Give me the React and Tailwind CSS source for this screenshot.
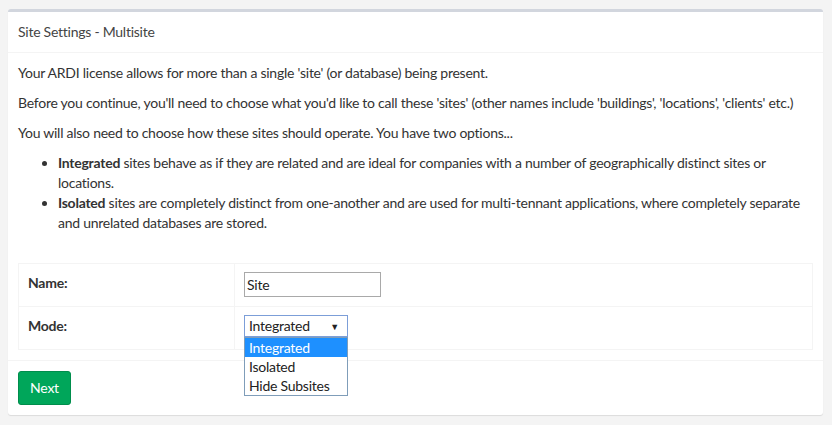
export default function App() {
  const font = { fontFamily: 'Lato, "Noto Sans", sans-serif' };
  return (
    <div className="w-[832px] h-[425px] bg-[#f4f4f4] pt-[9px] pl-[8px] text-[14px] text-[#333] leading-[20px] tracking-[-0.25px]" style={font}>
      <div className="w-[815px] bg-white border-t-[3px] border-[#d2d6de] rounded-[3px] shadow-[0_1px_1px_rgba(0,0,0,0.1)]">
        <div className="px-[10px] py-[10px] border-b border-[#f4f4f4] text-[#444]">Site Settings - Multisite</div>
        <div className="p-[10px]">
          <p className="mb-[10px]">Your ARDI license allows for more than a single 'site' (or database) being present.</p>
          <p className="mb-[10px]">Before you continue, you'll need to choose what you'd like to call these 'sites' (other names include 'buildings', 'locations', 'clients' etc.)</p>
          <p className="mb-[10px]">You will also need to choose how these sites should operate. You have two options...</p>
          <ul className="list-disc pl-[40px] mb-[30px]">
            <li><b>Integrated</b> sites behave as if they are related and are ideal for companies with a number of geographically distinct sites or locations.</li>
            <li><b>Isolated</b> sites are completely distinct from one-another and are used for multi-tennant applications, where completely separate and unrelated databases are stored.</li>
          </ul>
          <div className="border border-[#f4f4f4]">
            <div className="grid grid-cols-[216px_1fr] h-[43px] border-b border-[#f4f4f4]">
              <div className="px-[9px] pt-[9px] font-bold border-r border-[#f4f4f4]">Name:</div>
              <div className="pl-[9px] pt-[8px]">
                <div className="w-[137px] h-[25px] border border-[#a9a9a9] pl-[2px] leading-[23px] text-[#222]">Site</div>
              </div>
            </div>
            <div className="grid grid-cols-[216px_1fr] h-[42px]">
              <div className="px-[9px] pt-[9px] font-bold border-r border-[#f4f4f4]">Mode:</div>
              <div className="pl-[9px] pt-[8px] relative">
                <div className="w-[104px] h-[22px] border border-[#7c9ed8] flex items-center justify-between pl-[4px] pr-[8px] text-[#222]">
                  <span>Integrated</span>
                  <span className="text-[9px] leading-none">▼</span>
                </div>
                <div className="absolute left-[9px] top-[30px] w-[104px] border border-[#7f9db9] bg-white z-10 text-[#222]">
                  <div className="bg-[#1e90ff] text-white pl-[4px] h-[19px] leading-[19px]">Integrated</div>
                  <div className="pl-[4px] h-[19px] leading-[19px]">Isolated</div>
                  <div className="pl-[4px] h-[19px] leading-[19px]">Hide Subsites</div>
                </div>
              </div>
            </div>
          </div>
        </div>
        <div className="border-t border-[#f4f4f4] p-[10px]">
          <div className="w-[53px] h-[34px] bg-[#00a65a] border border-[#008d4c] rounded-[3px] text-white flex items-center justify-center">Next</div>
        </div>
      </div>
    </div>
  );
}
